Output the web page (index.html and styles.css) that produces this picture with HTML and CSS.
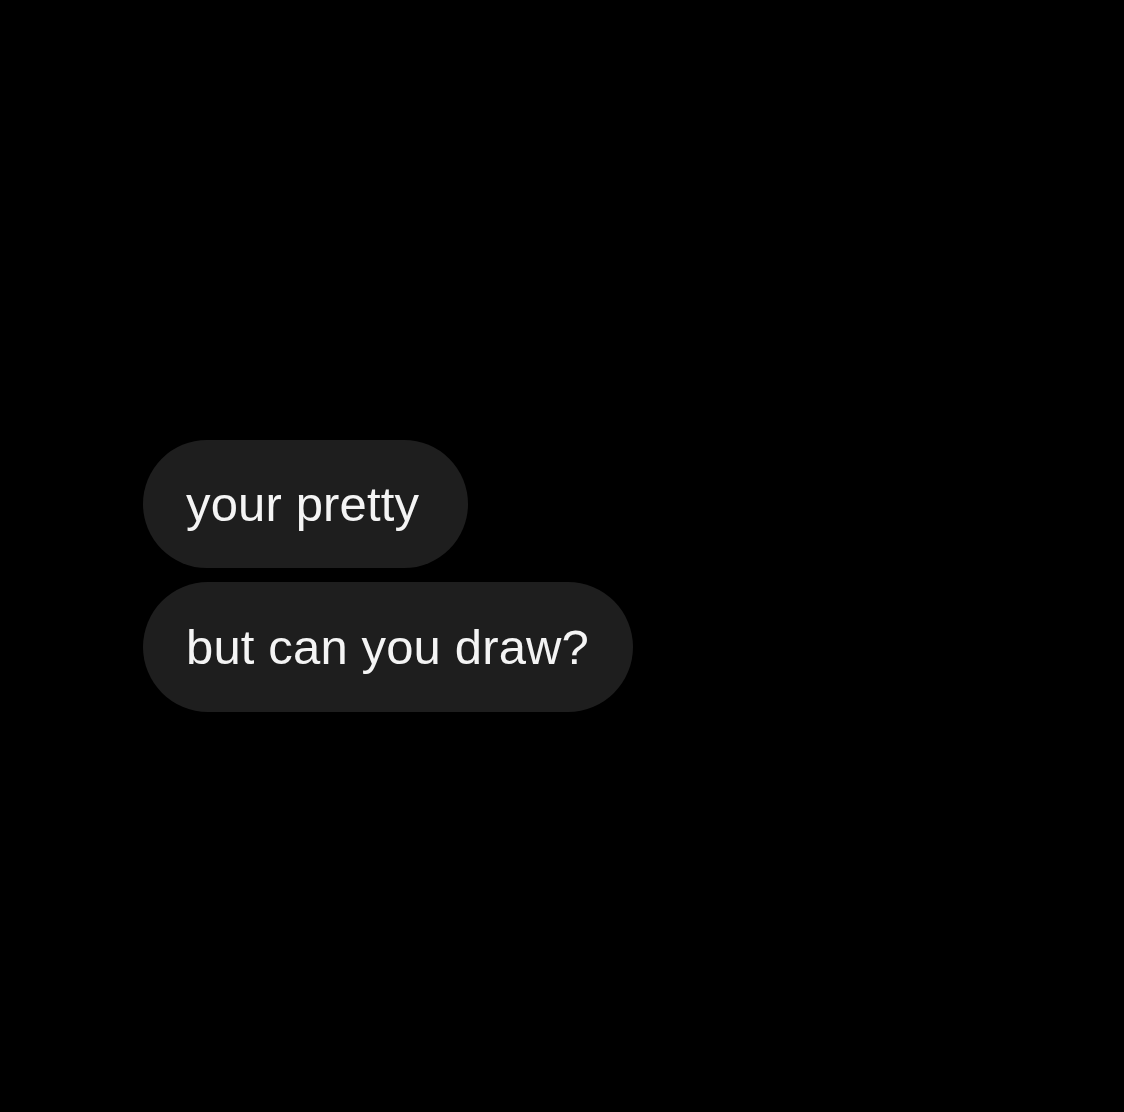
FILE: index.html
```html
<!DOCTYPE html>
<html>
<head>
<meta charset="utf-8">
<link rel="stylesheet" href="styles.css">
</head>
<body>
<div class="chat">
  <div class="bubble b1">your pretty</div>
  <div class="bubble b2">but can you draw?</div>
</div>
</body>
</html>
```
FILE: styles.css
```css
html, body {
  margin: 0;
  padding: 0;
  background: #000;
  width: 1124px;
  height: 1112px;
  overflow: hidden;
}
.chat {
  display: flex;
  flex-direction: column;
  align-items: flex-start;
  gap: 14px;
  padding: 440px 0 0 143px;
}
.bubble {
  background: #1e1e1e;
  color: #f4f4f4;
  font-family: "Liberation Sans", Arial, sans-serif;
  font-size: 49px;
  letter-spacing: 0.15px;
  line-height: 128px;
  height: 128px;
  padding: 0 44px 0 43px;
  border-radius: 64px;
  box-sizing: border-box;
  white-space: nowrap;
}
.b1 {
  padding-right: 49px;
}
.b2 {
  height: 130px;
  line-height: 130px;
  border-radius: 65px;
}
```
